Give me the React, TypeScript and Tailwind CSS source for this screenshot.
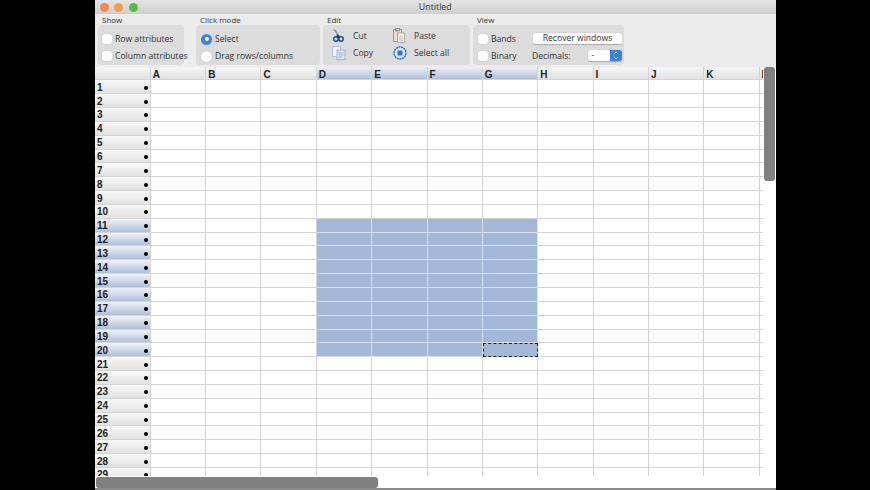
const columns = ["A", "B", "C", "D", "E", "F", "G", "H", "I", "J", "K", "L"];
const rows = Array.from({ length: 29 }, (_, i) => i + 1);

const isSelCol = (c: string) => ["D", "E", "F", "G"].includes(c);
const isSelRow = (r: number) => r >= 11 && r <= 20;

const Check = ({ label }: { label: string }) => (
  <div className="flex h-[17px] items-center gap-[3px] whitespace-nowrap">
    <span className="size-[10px] shrink-0 rounded-[2.5px] bg-white shadow-[0_0_1px_#999]" />
    <span>{label}</span>
  </div>
);

const Group = ({ title, className, children }: { title: string; className: string; children: React.ReactNode }) => (
  <div className={`flex shrink-0 flex-col ${className}`}>
    <div className="h-[11px] pl-[4px] text-[8px] leading-[11px] text-[#333]">{title}</div>
    <div className="h-[40px] rounded-[4px] bg-[#dcdcdc]">{children}</div>
  </div>
);

const CutIcon = () => (
  <svg width="12" height="14" viewBox="0 0 12 14">
    <path d="M2 0.5 L7 7 M3.5 1 L5.5 7" stroke="#8a94a0" strokeWidth="1.3" fill="none" />
    <circle cx="4" cy="10" r="2.2" fill="none" stroke="#1f4f9a" strokeWidth="1.5" />
    <circle cx="9" cy="10" r="2.2" fill="none" stroke="#1f4f9a" strokeWidth="1.5" />
    <circle cx="6" cy="7.5" r="1.4" fill="#26303e" />
  </svg>
);

const CopyIcon = () => (
  <svg width="14" height="14" viewBox="0 0 14 14">
    <rect x="0.5" y="0.5" width="8" height="10" fill="#eef1f6" stroke="#b4c3d8" />
    <rect x="5" y="4" width="8" height="9.5" fill="#dfe7f1" stroke="#a3b7d2" />
    <path d="M6.5 7 H11.5 M6.5 9 H11.5 M6.5 11 H10" stroke="#8da5c6" strokeWidth="0.8" />
  </svg>
);

const PasteIcon = () => (
  <svg width="12" height="15" viewBox="0 0 12 15">
    <rect x="0.5" y="1.5" width="8" height="12" fill="#ecdcc8" stroke="#d08a4e" />
    <rect x="2.5" y="0.5" width="4" height="2.5" fill="#b8b8b8" stroke="#777" strokeWidth="0.6" />
    <rect x="4.5" y="5" width="7" height="9.5" fill="#f4f4f4" stroke="#9a9a9a" strokeWidth="0.8" />
    <path d="M6 8 H10 M6 10 H10 M6 12 H10" stroke="#aaa" strokeWidth="0.7" />
  </svg>
);

const SelectAllIcon = () => (
  <svg width="14" height="14" viewBox="0 0 14 14">
    <circle cx="7" cy="7" r="6" fill="#cfe0f5" stroke="#2b6cc4" strokeWidth="1.4" strokeDasharray="2 0.6" />
    <rect x="4" y="4" width="6" height="6" rx="1" fill="#2f74cf" stroke="#fff" strokeWidth="0.8" />
  </svg>
);

export default function App() {
  return (
    <div className="h-[490px] w-[870px] overflow-hidden bg-black pl-[95px] font-['Open_Sans',sans-serif]">
      <div className="relative flex h-[490px] w-[681px] flex-col overflow-hidden bg-[#ececec] text-[#333]">
        <div className="flex h-[14px] shrink-0 items-center bg-gradient-to-b from-[#e4e4e4] to-[#cfcfcf] pl-[4.5px]">
          <div className="flex gap-[5.5px]">
            <span className="size-[9px] rounded-full bg-[#f0894e]" />
            <span className="size-[9px] rounded-full bg-[#f0a04e]" />
            <span className="size-[9px] rounded-full bg-[#4ebf48]" />
          </div>
          <div className="flex-1 pr-[43px] text-center text-[8.8px] leading-[14px] text-[#333]">Untitled</div>
        </div>

        <div className="flex h-[52.5px] shrink-0 pl-[3px] text-[8.6px] leading-[12px]">
          <Group title="Show" className="mr-[12px] w-[86px]">
            <div className="flex flex-col pl-[4px] pt-[5.5px]">
              <Check label="Row attributes" />
              <Check label="Column attributes" />
            </div>
          </Group>
          <Group title="Click mode" className="mr-[3px] w-[124px]">
            <div className="flex flex-col pl-[5px] pt-[5.5px]">
              <div className="flex h-[17px] items-center gap-[3px]">
                <span className="flex size-[11px] items-center justify-center rounded-full bg-[#3b82e6]">
                  <span className="size-[4px] rounded-full bg-white" />
                </span>
                <span>Select</span>
              </div>
              <div className="flex h-[17px] items-center gap-[3px]">
                <span className="size-[11px] rounded-full bg-white shadow-[0_0_1px_#999]" />
                <span>Drag rows/columns</span>
              </div>
            </div>
          </Group>
          <Group title="Edit" className="mr-[3px] w-[147px]">
            <div className="grid grid-cols-[61px_1fr] pl-[9px] pt-[2px]">
              <div className="flex h-[17px] items-center gap-[9px]"><CutIcon /><span>Cut</span></div>
              <div className="flex h-[17px] items-center gap-[9px]"><PasteIcon /><span>Paste</span></div>
              <div className="flex h-[17px] items-center gap-[7px]"><CopyIcon /><span>Copy</span></div>
              <div className="flex h-[17px] items-center gap-[7px]"><SelectAllIcon /><span>Select all</span></div>
            </div>
          </Group>
          <Group title="View" className="w-[151px]">
            <div className="grid grid-cols-[54px_1fr] pl-[5px] pt-[5.5px]">
              <Check label="Bands" />
              <div className="flex h-[17px] items-center pl-[1px]">
                <span className="h-[11px] w-[89px] -translate-y-[1px] rounded-[2px] bg-white text-center leading-[11px] shadow-[0_0.5px_1px_#aaa]">
                  Recover windows
                </span>
              </div>
              <Check label="Binary" />
              <div className="flex h-[17px] items-center">
                <span className="w-[55.5px] whitespace-nowrap">Decimals:</span>
                <span className="flex h-[11px] w-[34.5px] -translate-y-[1px] overflow-hidden rounded-[2.5px] bg-white shadow-[0_0.5px_1px_#aaa]">
                  <span className="flex-1 pl-[4px] leading-[10px]">-</span>
                  <span className="flex w-[12px] flex-col items-center justify-center bg-[#3b82e6]">
                    <svg width="6" height="9" viewBox="0 0 6 9">
                      <path d="M1 3 L3 1 L5 3 M1 6 L3 8 L5 6" stroke="#fff" strokeWidth="0.8" fill="none" />
                    </svg>
                  </span>
                </span>
              </div>
            </div>
          </Group>
        </div>

        <div className="min-h-0 flex-1 overflow-hidden bg-white font-['Liberation_Sans',sans-serif] text-[10px] font-bold leading-[14px] text-[#222]">
          <div className="grid w-[690px] grid-cols-[55.8px_repeat(12,55.35px)] auto-rows-[13.85px]">
            <div className="border-b border-r border-[#d4d4d4] bg-gradient-to-b from-[#f6f6f6] to-[#e2e2e2]" />
            {columns.map((c) => (
              <div
                key={c}
                className={`border-b border-r border-[#d4d4d4] pl-[2px] pt-[1px] ${
                  isSelCol(c) ? "bg-gradient-to-b from-[#f0f2f6] to-[#afc0db]" : "bg-gradient-to-b from-[#f6f6f6] to-[#e2e2e2]"
                }`}
              >
                {c}
              </div>
            ))}
            {rows.map((r) => (
              <div key={r} className="contents">
                <div
                  className={`flex items-center justify-between border-b border-r border-[#d4d4d4] pl-[2px] pr-[2px] pt-[2px] ${
                    isSelRow(r) ? "bg-gradient-to-b from-[#f0f2f6] to-[#afc0db]" : "bg-gradient-to-b from-[#f8f8f8] to-[#e2e2e2]"
                  }`}
                >
                  <span>{r}</span>
                  <span className="size-[4px] rounded-full bg-black" />
                </div>
                {columns.map((c) => {
                  const selected = isSelCol(c) && isSelRow(r);
                  const active = c === "G" && r === 20;
                  return (
                    <div
                      key={c}
                      className={
                        active
                          ? "border border-dashed border-[#222] bg-[#a3b7d6]"
                          : selected
                            ? "border-b border-r border-[#d8e0ec] bg-[#a3b7d6]"
                            : "border-b border-r border-[#d4d4d4] bg-white"
                      }
                    />
                  );
                })}
              </div>
            ))}
          </div>
        </div>

        <div className="absolute bottom-0 left-[668px] top-[67px] w-[13px] bg-white">
          <div className="ml-[1px] h-[114px] w-[11px] rounded-[3px] bg-[#808080]" />
        </div>
        <div className="absolute bottom-0 left-0 right-0 h-[14px] border-b-2 border-[#8c8c8c] bg-white">
          <div className="ml-[1px] mt-[1px] h-[11px] w-[282px] rounded-[3px] bg-[#808080]" />
        </div>
      </div>
    </div>
  );
}
